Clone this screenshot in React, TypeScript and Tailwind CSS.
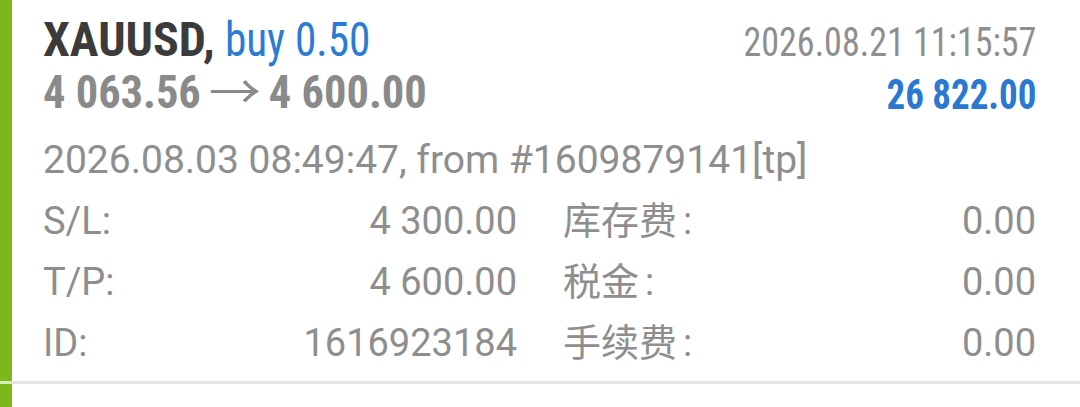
import React from "react";

const cond = { fontFamily: '"Roboto Condensed", "Liberation Sans Narrow", sans-serif' };

function Label({ text }: { text: string }) {
  return (
    <span>
      {text}
      <span className="ml-[6px]">:</span>
    </span>
  );
}

export default function App() {
  return (
    <div className="w-[1080px] h-[407px] bg-white flex flex-col overflow-hidden" style={{ fontFamily: 'Roboto, "Noto Sans CJK SC", sans-serif' }}>
      <div className="flex">
        <div className="w-[12px] bg-[#7db81a] shrink-0" />
        <div className="flex-1 pl-[31px] pr-[44px] pt-[14px] h-[381px]">
          <div className="flex justify-between">
            <div className="flex flex-col" style={cond}>
              <div className="text-[48px] leading-[52px] h-[52px] whitespace-nowrap">
                <span className="font-bold text-[#3b3b3b]">XAUUSD,</span>
                <span className="inline-block origin-left scale-x-[0.9] text-[#2b7bd4]">&nbsp;buy 0.50</span>
              </div>
              <div className="text-[47px] leading-[52px] h-[52px] font-bold text-[#8a8a8a] whitespace-nowrap">
                <span className="inline-block origin-left scale-x-[0.945]">
                  4 063.56
                  <span className="inline-block w-[56px] mx-[8px] text-center align-baseline font-normal text-[46px] leading-[30px]" style={{ fontFamily: '"Noto Sans CJK SC", sans-serif' }}>
                    <span className="inline-block scale-x-[1.2]">→</span>
                  </span>
                  4 600.00
                </span>
              </div>
            </div>
            <div className="flex flex-col items-end" style={cond}>
              <div className="text-[40px] leading-[52px] pt-[3px] text-[#8e8e8e] whitespace-nowrap">
                <span className="inline-block origin-right scale-x-[0.9]">2026.08.21 11:15:57</span>
              </div>
              <div className="text-[42px] leading-[52px] font-bold text-[#2a78cf] whitespace-nowrap">
                <span className="inline-block origin-right scale-x-[0.88]">26 822.00</span>
              </div>
            </div>
          </div>
          <div className="mt-[9px] text-[38px] leading-[61px] text-[#8e8e8e]">
            <div className="text-[39px] whitespace-nowrap">2026.08.03 08:49:47, from #1609879141[tp]</div>
            <div className="grid grid-cols-[474px_46px_1fr]">
              <div className="flex justify-between"><span>S/L:</span><span>4 300.00</span></div>
              <div />
              <div className="flex justify-between"><Label text="库存费" /><span>0.00</span></div>
              <div className="flex justify-between"><span>T/P:</span><span>4 600.00</span></div>
              <div />
              <div className="flex justify-between"><Label text="税金" /><span>0.00</span></div>
              <div className="flex justify-between"><span>ID:</span><span>1616923184</span></div>
              <div />
              <div className="flex justify-between"><Label text="手续费" /><span>0.00</span></div>
            </div>
          </div>
        </div>
      </div>
      <div className="flex h-[3px]">
        <div className="w-[12px] bg-[#d8ecb8]" />
        <div className="flex-1 bg-[#e4e4e4]" />
      </div>
      <div className="flex flex-1">
        <div className="w-[12px] bg-[#7db81a]" />
        <div className="flex-1" />
      </div>
    </div>
  );
}
